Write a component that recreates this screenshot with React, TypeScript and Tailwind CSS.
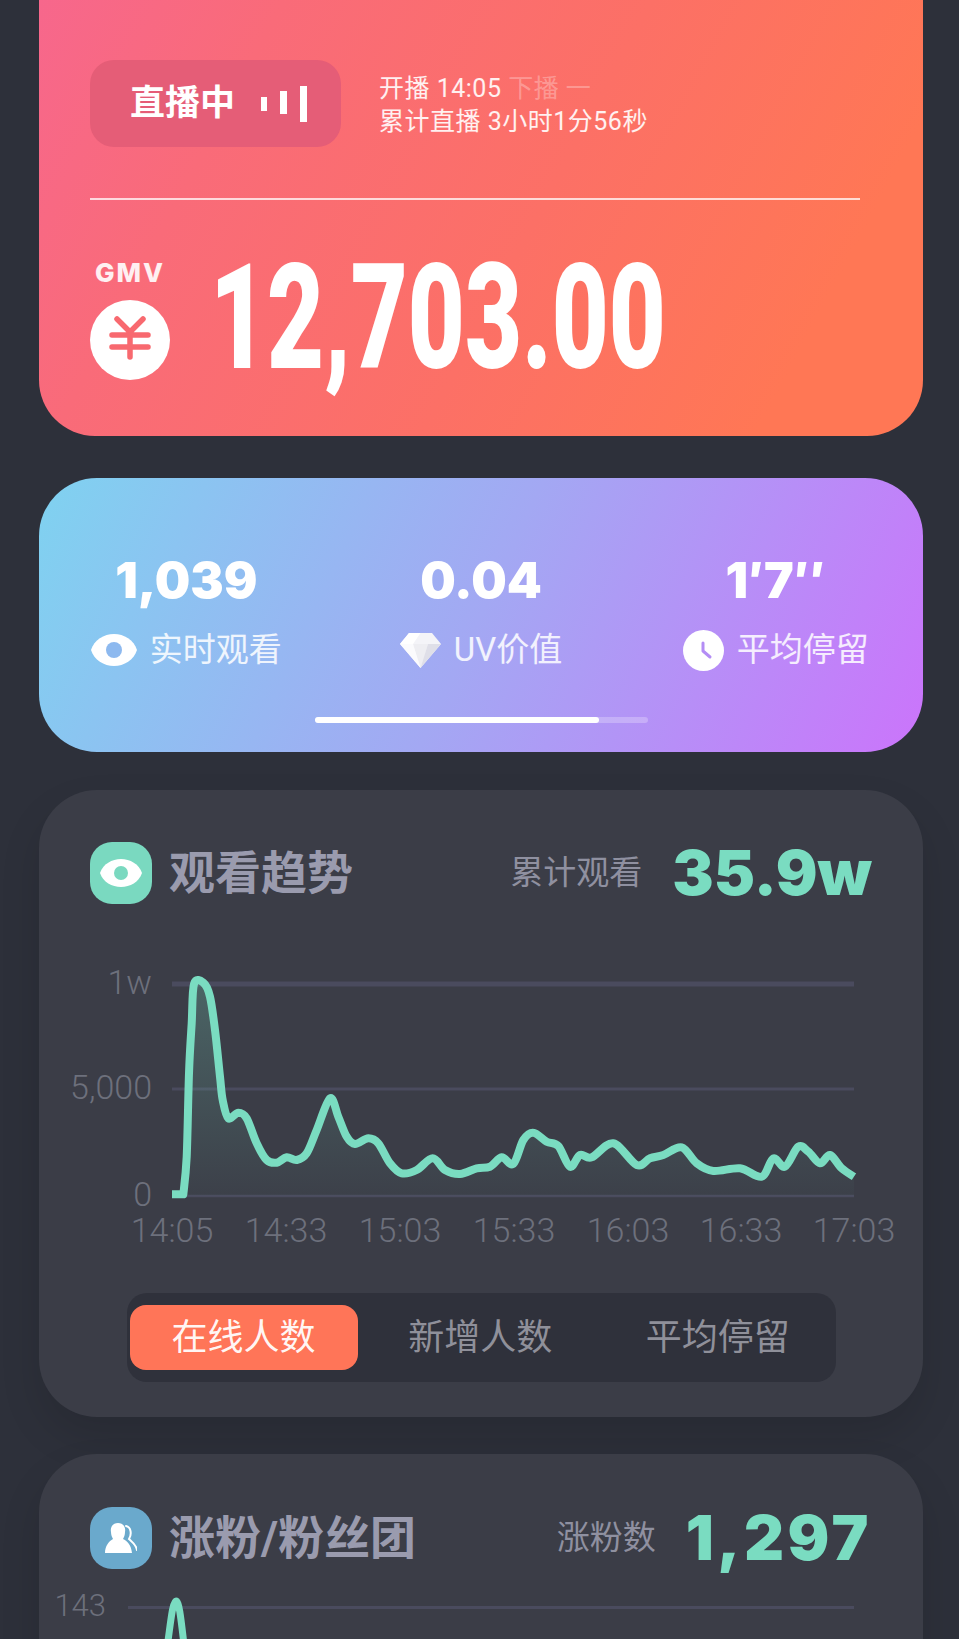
const leftPoints = [
  [430, 1213], [440, 1100], [447, 850], [455, 700], [462, 582], [490, 578], [510, 620], [525, 720],
  [540, 860], [548, 930], [565, 985], [595, 968], [620, 985], [650, 1060], [680, 1110], [710, 1118], [740, 1102],
  [770, 1110], [800, 1090], [830, 1020], [870, 925], [895, 980], [920, 1040], [945, 1062], [985, 1045], [1015, 1060],
  [1050, 1120], [1085, 1150], [1130, 1140], [1178, 1105], [1215, 1140], [1260, 1152], [1310, 1135],
];
const rightPoints = [
  [30, 1130], [65, 1102], [100, 1122], [130, 1050], [160, 1028], [200, 1055], [235, 1068], [270, 1130], [300, 1095],
  [335, 1102], [400, 1060], [470, 1125], [510, 1105], [550, 1095], [605, 1072], [650, 1120], [700, 1143], [780, 1135],
  [845, 1160], [880, 1105], [915, 1130], [955, 1070], [985, 1085], [1020, 1120], [1050, 1095], [1085, 1135], [1122, 1160],
];

// crop coordinates -> page coordinates
const trend = [
  ...leftPoints.map(([x, y]) => [40 + x / 3, 790 + y / 3]),
  ...rightPoints.map(([x, y]) => [480 + x / 3, 790 + y / 3]),
];

function smoothPath(points: number[][]) {
  let d = `M172 ${points[0][1]} L${points[0][0]} ${points[0][1]}`;
  for (let i = 0; i < points.length - 1; i++) {
    const p0 = points[Math.max(i - 1, 0)];
    const p1 = points[i];
    const p2 = points[i + 1];
    const p3 = points[Math.min(i + 2, points.length - 1)];
    const c1x = p1[0] + (p2[0] - p0[0]) / 6;
    const c1y = p1[1] + (p2[1] - p0[1]) / 6;
    const c2x = p2[0] - (p3[0] - p1[0]) / 6;
    const c2y = p2[1] - (p3[1] - p1[1]) / 6;
    d += ` C${c1x.toFixed(1)} ${c1y.toFixed(1)} ${c2x.toFixed(1)} ${c2y.toFixed(1)} ${p2[0].toFixed(1)} ${p2[1].toFixed(1)}`;
  }
  return d;
}

const trendLine = smoothPath(trend);
const trendArea = `${trendLine} L854 1196 L172 1196 Z`;

const xLabels = [
  { x: 172, label: "14:05" },
  { x: 286, label: "14:33" },
  { x: 400, label: "15:03" },
  { x: 514, label: "15:33" },
  { x: 628, label: "16:03" },
  { x: 741, label: "16:33" },
  { x: 854, label: "17:03" },
];

const yLabels = [
  { y: 984, label: "1w", h: 5 },
  { y: 1089, label: "5,000", h: 3 },
  { y: 1196, label: "0", h: 2.5 },
];

function TrendChart() {
  return (
    <svg viewBox="39 950 884 300" className="mt-[46px] block h-[300px] w-[884px]">
      <defs>
        <linearGradient id="trendFill" x1="0" y1="0" x2="0" y2="1">
          <stop offset="0%" stopColor="#7adcc1" stopOpacity="0.25" />
          <stop offset="100%" stopColor="#7adcc1" stopOpacity="0.02" />
        </linearGradient>
      </defs>
      {yLabels.map((item) => (
        <g key={item.label}>
          <rect x="172" y={item.y - item.h / 2} width="682" height={item.h} fill="#4a4b5e" />
          <text x="152" y={item.y + 10} textAnchor="end" className="fill-[#6d707c] text-[34px] font-light">
            {item.label}
          </text>
        </g>
      ))}
      <path d={trendArea} fill="url(#trendFill)" />
      <path d={trendLine} fill="none" stroke="#7adcc1" strokeWidth="8" strokeLinejoin="round" />
      {xLabels.map((item) => (
        <text key={item.label} x={item.x} y="1242" textAnchor="middle" className="fill-[#6d707c] text-[34px] font-light">
          {item.label}
        </text>
      ))}
    </svg>
  );
}

function FansChart() {
  return (
    <svg viewBox="39 1580 884 80" className="mt-3 block h-[80px] w-[884px]">
      <rect x="128" y="1605" width="726" height="3" fill="#4a4b5e" />
      <text x="106" y="1615" textAnchor="end" className="fill-[#6d707c] text-[31px] font-light">
        143
      </text>
      <path d="M165 1660 C170 1630 172 1600 176 1600 C180 1600 182 1630 186 1660" fill="none" stroke="#7adcc1" strokeWidth="7" />
    </svg>
  );
}

function EyeIcon({ pupil }: { pupil: string }) {
  return (
    <svg viewBox="0 0 46 32" className="h-[32px] w-[46px]">
      <path d="M0 16 C3 6 13 0 23 0 C33 0 43 6 46 16 C43 26 33 32 23 32 C13 32 3 26 0 16 Z" fill="#fff" />
      <circle cx="23" cy="16" r="8" fill={pupil} />
    </svg>
  );
}

function DiamondIcon() {
  return (
    <svg viewBox="0 0 41 36" className="h-[36px] w-[41px]">
      <polygon points="9,1 32,1 41,12 20.5,36 0,12" fill="#f4f4f8" />
      <polygon points="9,1 20.5,1 13,12 0,12" fill="#fff" />
      <polygon points="13,12 28,12 20.5,36" fill="#eeeef2" />
      <polygon points="28,12 41,12 20.5,36" fill="#dfdfe8" />
      <polygon points="0,12 13,12 20.5,36" fill="#fbfbfd" />
    </svg>
  );
}

function ClockIcon() {
  return (
    <svg viewBox="0 0 41 41" className="h-[41px] w-[41px]">
      <circle cx="20.5" cy="20.5" r="20.5" fill="#fff" />
      <path d="M20 13 V21 L27 27" fill="none" stroke="#b48df5" strokeWidth="3" strokeLinecap="round" strokeLinejoin="round" />
    </svg>
  );
}

function StatItem({ value, label, icon }: { value: string; label: string; icon: React.ReactNode }) {
  return (
    <div className="flex flex-col items-center">
      <div className="h-[50px] font-['Inter'] text-[50px] leading-[50px] font-black text-white">{value}</div>
      <div className="mt-[25px] flex h-[40px] items-center gap-[13px]">
        {icon}
        <span className="text-[33px] leading-[40px] text-white/85">{label}</span>
      </div>
    </div>
  );
}

function CardHeader({ icon, title, metricLabel, metric, metricClass }: { icon: React.ReactNode; title: string; metricLabel: string; metric: string; metricClass: string }) {
  return (
    <div className="flex h-[62px] items-center justify-between px-[51px]">
      <div className="flex items-center gap-[17px]">
        {icon}
        <h2 className="text-[46px] leading-[62px] font-bold text-[#9a9bae]">{title}</h2>
      </div>
      <div className="flex items-center gap-[30px]">
        <span className="text-[33px] leading-[62px] text-[#8f90a0]">{metricLabel}</span>
        <span className={`font-['Inter'] text-[62px] leading-[62px] font-black text-[#7adcc1] ${metricClass}`}>{metric}</span>
      </div>
    </div>
  );
}

export default function App() {
  return (
    <div className="h-[1639px] overflow-hidden bg-[#2d303a] pr-[36px] pl-[39px] font-[Roboto,'Noto_Sans_CJK_SC',sans-serif]">
      <section className="rounded-b-[56px] bg-[linear-gradient(118deg,#f7678c_0%,#f96b79_22%,#fc7066_55%,#ff7755_85%)] pt-[60px] pr-[51px] pb-[56px] pl-[51px]">
        <div className="flex items-center">
          <div className="flex h-[87px] w-[251px] items-center gap-[26px] rounded-[24px] bg-[#e55d77] pl-[40px]">
            <span className="text-[35px] leading-none font-bold text-white">直播中</span>
            <svg viewBox="0 0 46 36" className="h-[36px] w-[46px]">
              <rect x="0" y="11" width="6" height="14" fill="#fff" />
              <rect x="19" y="5" width="7" height="23" fill="#fff" />
              <rect x="39" y="0" width="7" height="36" fill="#fff" />
            </svg>
          </div>
          <div className="ml-[38px] pt-[2px] text-[25px] leading-[33px] tracking-[0.5px] text-white/90">
            <div>
              开播 14:05 <span className="text-white/30">下播 一</span>
            </div>
            <div>累计直播 3小时1分56秒</div>
          </div>
        </div>
        <div className="mt-[51px] h-[2px] w-[770px] bg-white/75" />
        <div className="mt-[56px] flex">
          <div className="flex w-[80px] flex-col items-center">
            <span className="font-['Inter'] text-[26px] leading-[34px] font-extrabold tracking-[2px] text-white/90">GMV</span>
            <svg viewBox="0 0 80 80" className="mt-[10px] h-[80px] w-[80px]">
              <circle cx="40" cy="40" r="40" fill="#fff" />
              <path d="M27 19 L40 32 L53 19 M40 32 V57 M22 35 H58 M22 47 H58" fill="none" stroke="#f8696f" strokeWidth="5.5" strokeLinecap="round" strokeLinejoin="round" />
            </svg>
          </div>
          <div className="ml-[40px] h-[124px] origin-left scale-x-[0.67] text-[147px] leading-[124px] font-black whitespace-nowrap text-white">
            12,703.00
          </div>
        </div>
      </section>

      <section className="mt-[42px] h-[274px] rounded-[58px] bg-[linear-gradient(115deg,#7fd2f0_0%,#a3a8f3_50%,#cb74fb_100%)] pt-[77px]">
        <div className="grid grid-cols-3">
          <StatItem value="1,039" label="实时观看" icon={<EyeIcon pupil="#8db9ef" />} />
          <StatItem value="0.04" label="UV价值" icon={<DiamondIcon />} />
          <StatItem value="1′7″" label="平均停留" icon={<ClockIcon />} />
        </div>
        <div className="mx-auto mt-[47px] h-[6px] w-[333px] rounded-full bg-white/25">
          <div className="h-full w-[284px] rounded-full bg-white" />
        </div>
      </section>

      <section className="mt-[38px] h-[627px] rounded-[58px] bg-[#3b3d47] pt-[52px] shadow-[0_20px_40px_rgba(0,0,0,0.12)]">
        <CardHeader
          title="观看趋势"
          metricLabel="累计观看"
          metric="35.9w"
          metricClass=""
          icon={
            <div className="flex h-[62px] w-[62px] items-center justify-center rounded-[22px] bg-[#7ad9c0]">
              <svg viewBox="0 0 42 28" className="h-[28px] w-[42px]">
                <path d="M0 14 C3 5 12 0 21 0 C30 0 39 5 42 14 C39 23 30 28 21 28 C12 28 3 23 0 14 Z" fill="#fff" />
                <circle cx="21" cy="14" r="7" fill="#7ad9c0" />
              </svg>
            </div>
          }
        />
        <TrendChart />
        <div className="mx-auto mt-[43px] flex h-[89px] w-[709px] items-center rounded-[20px] bg-[#2f313b] px-[3px]">
          <div className="flex h-[65px] w-[228px] items-center justify-center rounded-[16px] bg-[#ff7558] text-[36px] text-white/95">在线人数</div>
          <div className="flex-1 pl-2 text-center text-[36px] text-[#8f909a]">新增人数</div>
          <div className="flex-1 pl-2 text-center text-[36px] text-[#8f909a]">平均停留</div>
        </div>
      </section>

      <section className="mt-[37px] h-[400px] rounded-[58px] bg-[#3b3d47] pt-[53px] shadow-[0_20px_40px_rgba(0,0,0,0.12)]">
        <CardHeader
          title="涨粉/粉丝团"
          metricLabel="涨粉数"
          metric="1,297"
          metricClass="tracking-[3.5px]"
          icon={
            <div className="flex h-[62px] w-[62px] items-center justify-center rounded-[22px] bg-[#6aa9cc]">
              <svg viewBox="0 0 32 30" className="h-[30px] w-[32px]">
                <path d="M21 3 C26 4 27 11 24 16 C27 19 31 21 32 27" fill="none" stroke="#fff" strokeWidth="2" strokeLinecap="round" />
                <path d="M13 0 C18 0 21 4 20 9 C20 12 19 14 18 16 C22 18 26 21 27 30 L0 30 C0 23 4 18 8 16 C7 14 6 12 6 9 C5 4 8 0 13 0 Z" fill="#fff" />
              </svg>
            </div>
          }
        />
        <FansChart />
      </section>
    </div>
  );
}
